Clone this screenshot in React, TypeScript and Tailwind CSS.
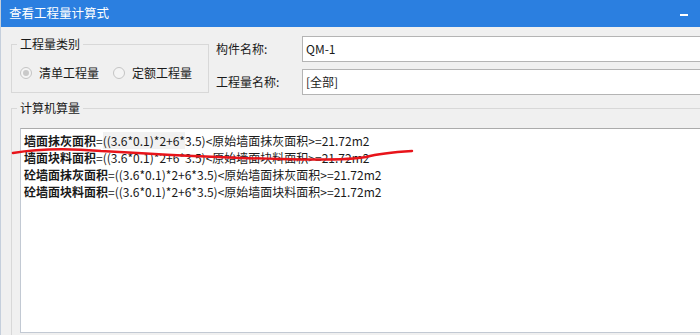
const font = "font-['Noto_Sans_CJK_SC','Noto_Sans',sans-serif]";

const rows = [
  { name: "墙面抹灰面积", src: "原始墙面抹灰面积" },
  { name: "墙面块料面积", src: "原始墙面块料面积" },
  { name: "砼墙面抹灰面积", src: "原始墙面抹灰面积" },
  { name: "砼墙面块料面积", src: "原始墙面块料面积" },
];

function Radio({ checked, label }: { checked?: boolean; label: string }) {
  return (
    <div className="flex shrink-0 items-center gap-[7px]">
      <span className="flex h-[12px] w-[12px] items-center justify-center rounded-full border border-[#c4c4c4] bg-[#f4f4f4]">
        {checked ? <span className="h-[6px] w-[6px] rounded-full bg-[#c9c9c9]" /> : null}
      </span>
      <span className="whitespace-nowrap text-[12px] leading-[14px] text-[#1a1a1a]">{label}</span>
    </div>
  );
}

export default function App() {
  return (
    <div className={`relative h-[335px] w-[700px] overflow-hidden border-l border-[#c5cfdc] bg-[#f0f0f0] ${font}`}>
      <div className="flex h-[27px] items-center justify-between bg-[#2b7fe0] pl-[8px] pr-[12px]">
        <span className="text-[12.5px] text-white">查看工程量计算式</span>
        <span className="mt-[3px] h-[2px] w-[8px] bg-white" />
      </div>

      <div className="flex items-start">
        <fieldset className="ml-[10px] mt-[10px] h-[56px] w-[198px] shrink-0 border border-[#d8d8d8]">
          <legend className="ml-[5px] px-[3px] text-[12px] leading-[14px] text-[#1a1a1a]">工程量类别</legend>
          <div className="flex items-center gap-[14px] pl-[8px] pt-[15px]">
            <Radio checked label="清单工程量" />
            <Radio label="定额工程量" />
          </div>
        </fieldset>

        <div className="ml-[7px] mt-[9px] flex shrink-0 flex-col gap-[7px]">
          <div className="flex items-center">
            <span className="w-[86px] whitespace-nowrap text-[12px] text-[#1a1a1a]">构件名称:</span>
            <div className="flex h-[26px] w-[420px] items-center border border-[#b4b4b4] bg-white pl-[3px] text-[12px] text-[#1a1a1a]">QM-1</div>
          </div>
          <div className="flex items-center">
            <span className="w-[86px] whitespace-nowrap text-[12px] text-[#1a1a1a]">工程量名称:</span>
            <div className="flex h-[26px] w-[420px] items-center border border-[#b4b4b4] bg-white pl-[3px] text-[12px] text-[#1a1a1a]">[全部]</div>
          </div>
        </div>
      </div>

      <fieldset className="ml-[10px] mt-[6px] h-[240px] w-[720px] border border-[#d8d8d8]">
        <legend className="ml-[5px] px-[3px] text-[12px] leading-[14px] text-[#1a1a1a]">计算机算量</legend>
        <div className="ml-[8px] mt-[13px] h-[205px] border border-[#c2c9d3] border-t-[#ababab] bg-white pl-[3px] pt-[3px] text-[12px] leading-[17px] text-[#1a1a1a]">
          {rows.map((r, i) => (
            <div key={i} className="whitespace-nowrap">
              <span className="font-bold">{r.name}</span>
              =
              {i === 0 ? <span className="bg-[#f1f1f1]">((3.6*0.1)*2+6*</span> : "((3.6*0.1)*2+6*"}
              3.5)&lt;{r.src}&gt;=21.72m2
            </div>
          ))}
        </div>
      </fieldset>

      <svg className="pointer-events-none absolute left-0 top-0" width="700" height="335" viewBox="0 0 700 335">
        <path
          d="M12 153 C 35 149, 65 148, 100 151 C 150 154, 220 158, 280 159 C 320 160, 350 160, 365 157 C 380 153, 395 152, 411 151"
          fill="none"
          stroke="#e8141a"
          strokeWidth="2.5"
          strokeLinecap="round"
        />
      </svg>
    </div>
  );
}
